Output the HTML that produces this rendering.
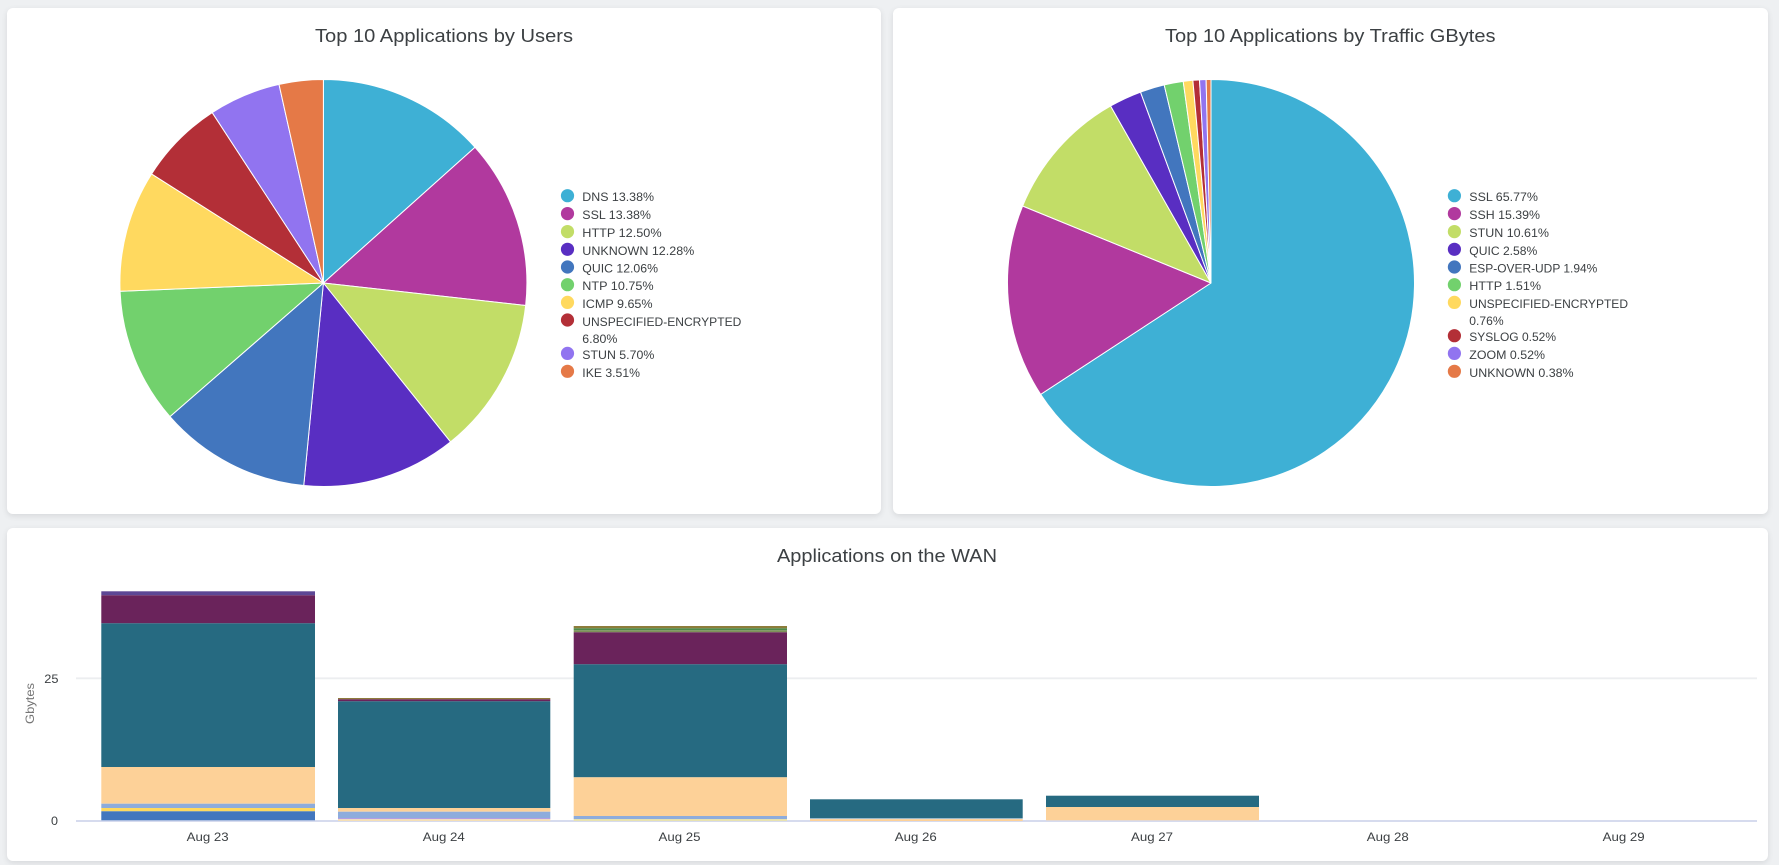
<!DOCTYPE html>
<html lang="en">
<head>
<meta charset="utf-8">
<title>Applications Dashboard</title>
<style>
html,body{margin:0;padding:0;width:1779px;height:865px;overflow:hidden;background:#eef0f2;}
svg{display:block;position:absolute;left:0;top:0;}
.card{position:absolute;background:#fff;border-radius:6px;box-shadow:0 2px 6px rgba(60,64,67,.13);}
text{font-family:"Liberation Sans",Arial,sans-serif;fill:#3c4043;}
.t{font-size:18.5px;}
.l{font-size:12px;}
.a{font-size:12px;}
.pie path{stroke:#fff;stroke-width:1;stroke-linejoin:round;}
</style>
</head>
<body>
<div class="card" style="left:7px;top:8px;width:874px;height:506px"></div>
<div class="card" style="left:893px;top:8px;width:875px;height:506px"></div>
<div class="card" style="left:7px;top:528px;width:1761px;height:333px"></div>
<svg width="1779" height="865" viewBox="0 0 1779 865" xmlns="http://www.w3.org/2000/svg">
<text class="t" x="315" y="42" textLength="258" lengthAdjust="spacingAndGlyphs">Top 10 Applications by Users</text>
<text class="t" x="1165" y="42" textLength="330.5" lengthAdjust="spacingAndGlyphs">Top 10 Applications by Traffic GBytes</text>
<text class="t" x="777" y="562" textLength="220" lengthAdjust="spacingAndGlyphs">Applications on the WAN</text>

<g class="pie">
<path fill="#3eb0d5" d="M323.4 283L323.4 79.5A203.5 203.5 0 0 1 475.03 147.29Z"/>
<path fill="#b1399e" d="M323.4 283L475.03 147.29A203.5 203.5 0 0 1 525.66 305.46Z"/>
<path fill="#c2dd67" d="M323.4 283L525.66 305.46A203.5 203.5 0 0 1 450.54 441.9Z"/>
<path fill="#592ec2" d="M323.4 283L450.54 441.9A203.5 203.5 0 0 1 303.74 485.55Z"/>
<path fill="#4276be" d="M323.4 283L303.74 485.55A203.5 203.5 0 0 1 169.91 416.62Z"/>
<path fill="#72d16d" d="M323.4 283L169.91 416.62A203.5 203.5 0 0 1 120.07 291.31Z"/>
<path fill="#ffd95f" d="M323.4 283L120.07 291.31A203.5 203.5 0 0 1 151.58 173.96Z"/>
<path fill="#b32f37" d="M323.4 283L151.58 173.96A203.5 203.5 0 0 1 212.21 112.56Z"/>
<path fill="#9174f0" d="M323.4 283L212.21 112.56A203.5 203.5 0 0 1 279.01 84.4Z"/>
<path fill="#e57947" d="M323.4 283L279.01 84.4A203.5 203.5 0 0 1 323.4 79.5Z"/>
</g>
<g class="pie">
<path fill="#3eb0d5" d="M1211 283L1211 79.5A203.5 203.5 0 1 1 1040.68 394.37Z"/>
<path fill="#b1399e" d="M1211 283L1040.68 394.37A203.5 203.5 0 0 1 1022.64 205.98Z"/>
<path fill="#c2dd67" d="M1211 283L1022.64 205.98A203.5 203.5 0 0 1 1110.6 105.99Z"/>
<path fill="#592ec2" d="M1211 283L1110.6 105.99A203.5 203.5 0 0 1 1140.5 92.1Z"/>
<path fill="#4276be" d="M1211 283L1140.5 92.1A203.5 203.5 0 0 1 1164.22 84.95Z"/>
<path fill="#72d16d" d="M1211 283L1164.22 84.95A203.5 203.5 0 0 1 1183.21 81.41Z"/>
<path fill="#ffd95f" d="M1211 283L1183.21 81.41A203.5 203.5 0 0 1 1192.87 80.31Z"/>
<path fill="#b32f37" d="M1211 283L1192.87 80.31A203.5 203.5 0 0 1 1199.5 79.83Z"/>
<path fill="#9174f0" d="M1211 283L1199.5 79.83A203.5 203.5 0 0 1 1206.13 79.56Z"/>
<path fill="#e57947" d="M1211 283L1206.13 79.56A203.5 203.5 0 0 1 1211 79.5Z"/>
</g>

<g>
<circle cx="567.5" cy="195.7" r="6.6" fill="#3eb0d5"/>
<circle cx="567.5" cy="213.6" r="6.6" fill="#b1399e"/>
<circle cx="567.5" cy="231.6" r="6.6" fill="#c2dd67"/>
<circle cx="567.5" cy="249.3" r="6.6" fill="#592ec2"/>
<circle cx="567.5" cy="267" r="6.6" fill="#4276be"/>
<circle cx="567.5" cy="284.7" r="6.6" fill="#72d16d"/>
<circle cx="567.5" cy="302.4" r="6.6" fill="#ffd95f"/>
<circle cx="567.5" cy="320" r="6.6" fill="#b32f37"/>
<circle cx="567.5" cy="353.4" r="6.6" fill="#9174f0"/>
<circle cx="567.5" cy="371.3" r="6.6" fill="#e57947"/>
<text class="l" x="582.3" y="201" textLength="71.7" lengthAdjust="spacingAndGlyphs">DNS 13.38%</text>
<text class="l" x="582.3" y="219" textLength="68.7" lengthAdjust="spacingAndGlyphs">SSL 13.38%</text>
<text class="l" x="582.3" y="237" textLength="79.3" lengthAdjust="spacingAndGlyphs">HTTP 12.50%</text>
<text class="l" x="582.3" y="255" textLength="112" lengthAdjust="spacingAndGlyphs">UNKNOWN 12.28%</text>
<text class="l" x="582.3" y="272.7" textLength="75.7" lengthAdjust="spacingAndGlyphs">QUIC 12.06%</text>
<text class="l" x="582.3" y="290" textLength="71.3" lengthAdjust="spacingAndGlyphs">NTP 10.75%</text>
<text class="l" x="582.3" y="308" textLength="70.3" lengthAdjust="spacingAndGlyphs">ICMP 9.65%</text>
<text class="l" x="582.3" y="326" textLength="159" lengthAdjust="spacingAndGlyphs">UNSPECIFIED-ENCRYPTED</text>
<text class="l" x="582.3" y="343" textLength="35" lengthAdjust="spacingAndGlyphs">6.80%</text>
<text class="l" x="582.3" y="359" textLength="72" lengthAdjust="spacingAndGlyphs">STUN 5.70%</text>
<text class="l" x="582.3" y="377" textLength="57.7" lengthAdjust="spacingAndGlyphs">IKE 3.51%</text>
</g>
<g>
<circle cx="1454.4" cy="195.7" r="6.6" fill="#3eb0d5"/>
<circle cx="1454.4" cy="213.6" r="6.6" fill="#b1399e"/>
<circle cx="1454.4" cy="231.6" r="6.6" fill="#c2dd67"/>
<circle cx="1454.4" cy="249.3" r="6.6" fill="#592ec2"/>
<circle cx="1454.4" cy="267" r="6.6" fill="#4276be"/>
<circle cx="1454.4" cy="284.7" r="6.6" fill="#72d16d"/>
<circle cx="1454.4" cy="302.4" r="6.6" fill="#ffd95f"/>
<circle cx="1454.4" cy="335.7" r="6.6" fill="#b32f37"/>
<circle cx="1454.4" cy="353.4" r="6.6" fill="#9174f0"/>
<circle cx="1454.4" cy="371.3" r="6.6" fill="#e57947"/>
<text class="l" x="1469.3" y="201" textLength="68.7" lengthAdjust="spacingAndGlyphs">SSL 65.77%</text>
<text class="l" x="1469.3" y="219" textLength="70.7" lengthAdjust="spacingAndGlyphs">SSH 15.39%</text>
<text class="l" x="1469.3" y="237" textLength="79.7" lengthAdjust="spacingAndGlyphs">STUN 10.61%</text>
<text class="l" x="1469.3" y="255" textLength="68" lengthAdjust="spacingAndGlyphs">QUIC 2.58%</text>
<text class="l" x="1469.3" y="272.7" textLength="128" lengthAdjust="spacingAndGlyphs">ESP-OVER-UDP 1.94%</text>
<text class="l" x="1469.3" y="290" textLength="71.7" lengthAdjust="spacingAndGlyphs">HTTP 1.51%</text>
<text class="l" x="1469.3" y="308" textLength="158.7" lengthAdjust="spacingAndGlyphs">UNSPECIFIED-ENCRYPTED</text>
<text class="l" x="1469.3" y="325" textLength="34.3" lengthAdjust="spacingAndGlyphs">0.76%</text>
<text class="l" x="1469.3" y="341" textLength="86.7" lengthAdjust="spacingAndGlyphs">SYSLOG 0.52%</text>
<text class="l" x="1469.3" y="359" textLength="75.7" lengthAdjust="spacingAndGlyphs">ZOOM 0.52%</text>
<text class="l" x="1469.3" y="377" textLength="104.3" lengthAdjust="spacingAndGlyphs">UNKNOWN 0.38%</text>
</g>

<!-- grid and axis -->
<rect x="76" y="677.6" width="1681" height="1" fill="#e4e5e8"/>
<rect x="76" y="678.6" width="1681" height="0.8" fill="#f4f5f6"/>
<rect x="76" y="820" width="1681" height="2" fill="#d6dbee"/>

<!-- bar 1 -->
<g>
<rect x="101.3" y="591.3" width="213.7" height="4" fill="#5d4795"/>
<rect x="101.3" y="595.3" width="213.7" height="28" fill="#6a235b"/>
<rect x="101.3" y="623.3" width="213.7" height="143.7" fill="#266a81"/>
<rect x="101.3" y="767" width="213.7" height="36.7" fill="#fdd198"/>
<rect x="101.3" y="803.7" width="213.7" height="4.3" fill="#8eacdc"/>
<rect x="101.3" y="808" width="213.7" height="3.3" fill="#ffd95f"/>
<rect x="101.3" y="811.3" width="213.7" height="9" fill="#4276be"/>
</g>
<!-- bar 2 -->
<g>
<rect x="338" y="698" width="212.3" height="1.3" fill="#8e7b3b"/>
<rect x="338" y="699.3" width="212.3" height="2" fill="#6a235b"/>
<rect x="338" y="701.3" width="212.3" height="106.7" fill="#266a81"/>
<rect x="338" y="808" width="212.3" height="3.7" fill="#fdd198"/>
<rect x="338" y="811.7" width="212.3" height="6.6" fill="#8eacdc"/>
<rect x="338" y="818.3" width="212.3" height="0.9" fill="#b08be0"/>
<rect x="338" y="819.2" width="212.3" height="1.8" fill="#f5dfb5"/>
</g>
<!-- bar 3 -->
<g>
<rect x="573.7" y="626" width="213.3" height="2.3" fill="#8d7d3b"/>
<rect x="573.7" y="628.3" width="213.3" height="2" fill="#4e8a4a"/>
<rect x="573.7" y="630.3" width="213.3" height="2" fill="#7e9059"/>
<rect x="573.7" y="632.3" width="213.3" height="32" fill="#6a235b"/>
<rect x="573.7" y="664.3" width="213.3" height="113" fill="#266a81"/>
<rect x="573.7" y="777.3" width="213.3" height="38.7" fill="#fdd198"/>
<rect x="573.7" y="816" width="213.3" height="3" fill="#8eacdc"/>
<rect x="573.7" y="819" width="213.3" height="2" fill="#e8e2b0"/>
</g>
<!-- bar 4 -->
<g>
<rect x="810" y="799.3" width="212.7" height="19" fill="#266a81"/>
<rect x="810" y="818.3" width="212.7" height="0.8" fill="#a9c3d4"/>
<rect x="810" y="819.1" width="212.7" height="1.9" fill="#fdd198"/>
</g>
<!-- bar 5 -->
<g>
<rect x="1046" y="795.7" width="213" height="11.3" fill="#266a81"/>
<rect x="1046" y="807" width="213" height="13.3" fill="#fdd198"/>
</g>

<text class="a" x="44.3" y="683" textLength="14.2" lengthAdjust="spacingAndGlyphs">25</text>
<text class="a" x="51" y="825" textLength="7" lengthAdjust="spacingAndGlyphs">0</text>
<text class="a" transform="translate(34 724) rotate(-90)" x="0" y="0" textLength="41" lengthAdjust="spacingAndGlyphs" style="fill:#757575">Gbytes</text>
<text class="a" x="186.7" y="841" textLength="42" lengthAdjust="spacingAndGlyphs">Aug 23</text>
<text class="a" x="422.8" y="841" textLength="42" lengthAdjust="spacingAndGlyphs">Aug 24</text>
<text class="a" x="658.5" y="841" textLength="42" lengthAdjust="spacingAndGlyphs">Aug 25</text>
<text class="a" x="894.8" y="841" textLength="42" lengthAdjust="spacingAndGlyphs">Aug 26</text>
<text class="a" x="1131" y="841" textLength="42" lengthAdjust="spacingAndGlyphs">Aug 27</text>
<text class="a" x="1366.8" y="841" textLength="42" lengthAdjust="spacingAndGlyphs">Aug 28</text>
<text class="a" x="1602.7" y="841" textLength="42" lengthAdjust="spacingAndGlyphs">Aug 29</text>
</svg>
</body>
</html>
